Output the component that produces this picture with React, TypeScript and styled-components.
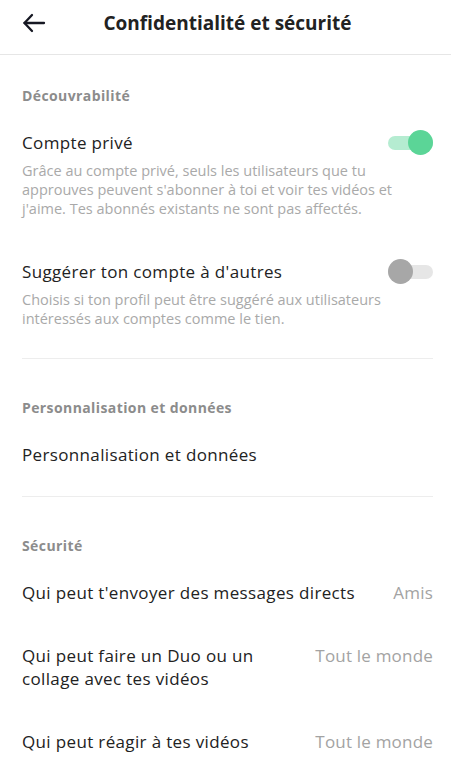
import React from "react";
import styled, { createGlobalStyle } from "styled-components";

const Global = createGlobalStyle`
  html, body { margin: 0; padding: 0; background: #fff; }
  body { font-family: "Open Sans", "Liberation Sans", sans-serif; -webkit-font-smoothing: antialiased; }
  * { box-sizing: border-box; }
`;

const Page = styled.div`
  width: 451px;
  min-height: 766px;
  background: #fff;
  color: #1f1f1f;
`;

const Header = styled.header`
  height: 55px;
  padding: 0 18px 9px 22px;
  display: grid;
  grid-template-columns: 1fr auto 1fr;
  align-items: center;
  border-bottom: 1px solid #e6e6e6;
`;

const BackButton = styled.button`
  justify-self: start;
  width: 28px;
  height: 28px;
  padding: 0;
  border: 0;
  background: none;
  display: flex;
  align-items: center;
  color: #161823;
`;

const Title = styled.h1`
  margin: 0;
  font-size: 19px;
  font-weight: 700;
  color: #222;
  letter-spacing: 0;
`;

const Main = styled.main`
  padding-top: 31px;
  display: flex;
  flex-direction: column;
`;

const Section = styled.section<{ $first?: boolean }>`
  padding: ${(p) => (p.$first ? "0" : "39px")} 18px 30px 22px;
`;

const SectionTitle = styled.h2`
  margin: 0 0 25px;
  font-size: 14px;
  line-height: 20px;
  font-weight: 700;
  letter-spacing: 0.4px;
  color: #8c8c8c;
`;

const Rows = styled.div<{ $gap: number }>`
  display: flex;
  flex-direction: column;
  gap: ${(p) => p.$gap}px;
`;

const Row = styled.div<{ $align?: string }>`
  display: flex;
  justify-content: space-between;
  align-items: ${(p) => p.$align || "center"};
  gap: 16px;
`;

const RowLabel = styled.div<{ $narrow?: boolean }>`
  font-size: 17px;
  line-height: 23px;
  letter-spacing: 0.35px;
  color: #222;
  max-width: ${(p) => (p.$narrow ? "250px" : "none")};
`;

const Value = styled.div`
  font-size: 17px;
  line-height: 23px;
  letter-spacing: 0.2px;
  color: #a3a3a3;
  white-space: nowrap;
`;

const Desc = styled.p`
  margin: 7px 30px 0 0;
  font-size: 14.5px;
  line-height: 19px;
  color: #a9a9a9;
`;

const Divider = styled.hr`
  margin: 0 18px 0 22px;
  border: 0;
  border-top: 1px solid #ededed;
`;

const Track = styled.div<{ $on: boolean }>`
  position: relative;
  flex: none;
  width: 45px;
  height: 14px;
  border-radius: 7px;
  background: ${(p) => (p.$on ? "#b5ecd1" : "#e6e6e6")};
`;

const Knob = styled.div<{ $on: boolean }>`
  position: absolute;
  top: -5.5px;
  ${(p) => (p.$on ? "right: 0;" : "left: 0;")}
  width: 25px;
  height: 25px;
  border-radius: 50%;
  background: ${(p) => (p.$on ? "#5bd597" : "#a7a7a7")};
`;

const Toggle = ({ on }: { on: boolean }) => (
  <Track $on={on}>
    <Knob $on={on} />
  </Track>
);

const ToggleItem = ({ label, desc, on }: { label: string; desc: string; on: boolean }) => (
  <div>
    <Row>
      <RowLabel>{label}</RowLabel>
      <Toggle on={on} />
    </Row>
    <Desc>{desc}</Desc>
  </div>
);

export default function App() {
  return (
    <Page>
      <Global />
      <Header>
        <BackButton aria-label="Retour">
          <svg width="24" height="24" viewBox="0 0 24 24" fill="none" stroke="currentColor" strokeWidth="2.3" strokeLinecap="round" strokeLinejoin="round">
            <path d="M22 12H2.5" />
            <path d="M10 4L2.5 12L10 20" />
          </svg>
        </BackButton>
        <Title>Confidentialité et sécurité</Title>
        <span />
      </Header>
      <Main>
        <Section $first>
          <SectionTitle>Découvrabilité</SectionTitle>
          <Rows $gap={42}>
            <ToggleItem
              label="Compte privé"
              on
              desc="Grâce au compte privé, seuls les utilisateurs que tu approuves peuvent s'abonner à toi et voir tes vidéos et j'aime. Tes abonnés existants ne sont pas affectés."
            />
            <ToggleItem
              label="Suggérer ton compte à d'autres"
              on={false}
              desc="Choisis si ton profil peut être suggéré aux utilisateurs intéressés aux comptes comme le tien."
            />
          </Rows>
        </Section>
        <Divider />
        <Section>
          <SectionTitle>Personnalisation et données</SectionTitle>
          <Row>
            <RowLabel>Personnalisation et données</RowLabel>
          </Row>
        </Section>
        <Divider />
        <Section>
          <SectionTitle>Sécurité</SectionTitle>
          <Rows $gap={40}>
            <Row>
              <RowLabel>Qui peut t'envoyer des messages directs</RowLabel>
              <Value>Amis</Value>
            </Row>
            <Row $align="flex-start">
              <RowLabel $narrow>Qui peut faire un Duo ou un collage avec tes vidéos</RowLabel>
              <Value>Tout le monde</Value>
            </Row>
            <Row>
              <RowLabel>Qui peut réagir à tes vidéos</RowLabel>
              <Value>Tout le monde</Value>
            </Row>
          </Rows>
        </Section>
      </Main>
    </Page>
  );
}
